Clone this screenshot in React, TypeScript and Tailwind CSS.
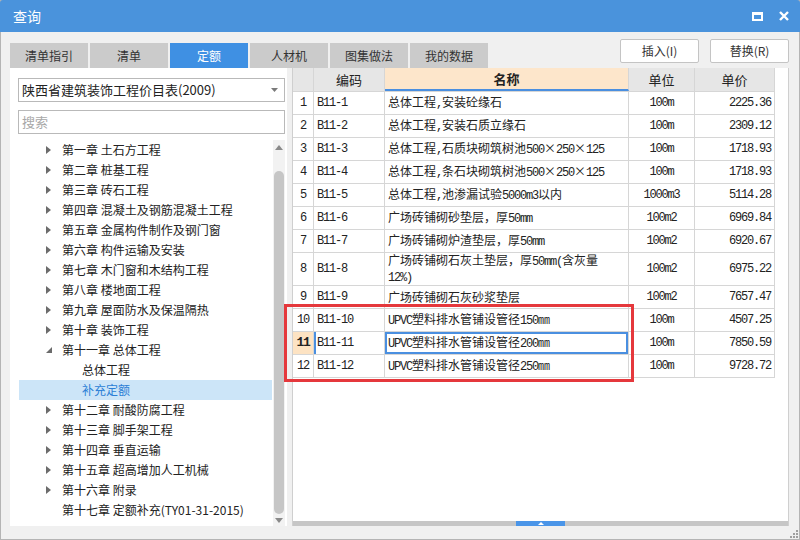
import React from 'react';

const tabs = ['清单指引', '清单', '定额', '人材机', '图集做法', '我的数据'];

type TreeItem = { label: string; level: number; arrow?: 'right' | 'down'; selected?: boolean };

const tree: TreeItem[] = [
  { label: '第一章 土石方工程', level: 0, arrow: 'right' },
  { label: '第二章 桩基工程', level: 0, arrow: 'right' },
  { label: '第三章 砖石工程', level: 0, arrow: 'right' },
  { label: '第四章 混凝土及钢筋混凝土工程', level: 0, arrow: 'right' },
  { label: '第五章 金属构件制作及钢门窗', level: 0, arrow: 'right' },
  { label: '第六章 构件运输及安装', level: 0, arrow: 'right' },
  { label: '第七章 木门窗和木结构工程', level: 0, arrow: 'right' },
  { label: '第八章 楼地面工程', level: 0, arrow: 'right' },
  { label: '第九章 屋面防水及保温隔热', level: 0, arrow: 'right' },
  { label: '第十章 装饰工程', level: 0, arrow: 'right' },
  { label: '第十一章 总体工程', level: 0, arrow: 'down' },
  { label: '总体工程', level: 1 },
  { label: '补充定额', level: 1, selected: true },
  { label: '第十二章 耐酸防腐工程', level: 0, arrow: 'right' },
  { label: '第十三章 脚手架工程', level: 0, arrow: 'right' },
  { label: '第十四章 垂直运输', level: 0, arrow: 'right' },
  { label: '第十五章 超高增加人工机械', level: 0, arrow: 'right' },
  { label: '第十六章 附录', level: 0, arrow: 'right' },
  { label: '第十七章 定额补充(TY01-31-2015)', level: 0 },
];

const rows = [
  ['1', 'B11-1', '总体工程,安装砼缘石', '100m', '2225.36'],
  ['2', 'B11-2', '总体工程,安装石质立缘石', '100m', '2309.12'],
  ['3', 'B11-3', '总体工程,石质块砌筑树池500×250×125', '100m', '1718.93'],
  ['4', 'B11-4', '总体工程,条石块砌筑树池500×250×125', '100m', '1718.93'],
  ['5', 'B11-5', '总体工程,池渗漏试验5000m3以内', '1000m3', '5114.28'],
  ['6', 'B11-6', '广场砖铺砌砂垫层，厚50mm', '100m2', '6969.84'],
  ['7', 'B11-7', '广场砖铺砌炉渣垫层，厚50mm', '100m2', '6920.67'],
  ['8', 'B11-8', '广场砖铺砌石灰土垫层，厚50mm(含灰量\n12%)', '100m2', '6975.22'],
  ['9', 'B11-9', '广场砖铺砌石灰砂浆垫层', '100m2', '7657.47'],
  ['10', 'B11-10', 'UPVC塑料排水管铺设管径150㎜', '100m', '4507.25'],
  ['11', 'B11-11', 'UPVC塑料排水管铺设管径200㎜', '100m', '7850.59'],
  ['12', 'B11-12', 'UPVC塑料排水管铺设管径250㎜', '100m', '9728.72'],
];

// ascii runs get the narrow mono face, like SimSun's half-width glyphs
const Mixed = ({ text }: { text: string }) => {
  const lines = text.split('\n');
  return (
    <>
      {lines.map((line, li) => (
        <React.Fragment key={li}>
          {li > 0 && <br />}
          {line.split(/([\x20-\x7e]+)/).map((p, i) =>
            i % 2 === 1 ? (
              <span key={i} className="font-['Liberation_Mono',monospace] tracking-[-1.2px]">
                {p}
              </span>
            ) : (
              p
            )
          )}
        </React.Fragment>
      ))}
    </>
  );
};

const Arrow = ({ dir }: { dir?: 'right' | 'down' }) => {
  if (dir === 'right')
    return (
      <svg width="5" height="8" viewBox="0 0 5 8">
        <path d="M0 0 L5 4 L0 8 Z" fill="#6b6b6b" />
      </svg>
    );
  if (dir === 'down')
    return (
      <svg width="6" height="6" viewBox="0 0 6 6">
        <path d="M6 0 L6 6 L0 6 Z" fill="#6b6b6b" />
      </svg>
    );
  return null;
};

const App: React.FC = () => {
  return (
    <div className="relative w-[800px] h-[540px] overflow-hidden bg-[#f0f0f0] shadow-[inset_0_0_0_1px_#b4b4b4] font-['Noto_Sans_CJK_SC',sans-serif] text-[#222]">
      {/* title bar */}
      <div className="h-[32px] bg-[#4a93dc] flex items-center justify-between pl-[13px] pr-[11px] rounded-t-[3px]">
        <span className="text-white text-[14px]">查询</span>
        <div className="flex items-center gap-[16px]">
          <svg width="11" height="9" viewBox="0 0 11 9">
            <rect x="1" y="1.5" width="9" height="6.5" fill="none" stroke="white" strokeWidth="2" />
            <rect x="0" y="0" width="11" height="3" fill="white" />
          </svg>
          <svg width="10" height="10" viewBox="0 0 10 10">
            <path d="M1 1 L9 9 M9 1 L1 9" stroke="white" strokeWidth="2.4" />
          </svg>
        </div>
      </div>

      {/* tab row */}
      <div className="h-[36px] flex justify-between pl-[10px] pr-[11px]">
        <div className="flex items-end gap-[2px]">
          {tabs.map((t) => (
            <div
              key={t}
              className={
                t === '定额'
                  ? 'w-[78px] h-[25px] flex items-center justify-center text-[12px] bg-[#3f90e3] text-white'
                  : 'w-[78px] h-[25px] flex items-center justify-center text-[12px] bg-[#cbcbcb] text-[#333]'
              }
            >
              {t}
            </div>
          ))}
        </div>
        <div className="flex gap-[11px] pt-[7px]">
          <div className="w-[79px] h-[24px] flex items-center justify-center bg-white border border-[#c4c4c4] rounded-[2px] text-[12px] text-[#333]">
            插入(I)
          </div>
          <div className="w-[79px] h-[24px] flex items-center justify-center bg-white border border-[#c4c4c4] rounded-[2px] text-[12px] text-[#333]">
            替换(R)
          </div>
        </div>
      </div>

      {/* main */}
      <div className="h-[458px] flex gap-[5px] pl-[10px] pr-[11px]">
        {/* left panel */}
        <div className="w-[277px] bg-white flex flex-col pl-[8px] pr-[2px] pt-[10px]">
          <div className="h-[24px] border border-[#b9b9b9] flex items-center justify-between pl-[3px] pr-[6px] text-[13px] text-[#222]">
            <span>陕西省建筑装饰工程价目表(2009)</span>
            <svg width="7" height="4" viewBox="0 0 7 4">
              <path d="M0 0 L7 0 L3.5 4 Z" fill="#7a7a7a" />
            </svg>
          </div>
          <div className="h-[24px] mt-[8px] border border-[#b9b9b9] flex items-center pl-[3px] text-[13px] text-[#a8a8a8]">
            搜索
          </div>
          <div className="flex-1 mt-[6px] flex">
            <div className="flex-1 pl-[1px] pr-[1px]">
              {tree.map((it) => (
                <div
                  key={it.label}
                  className={
                    it.selected
                      ? 'h-[20px] flex items-center bg-[#cce5f8] text-[#2b7fd6] text-[12px]'
                      : 'h-[20px] flex items-center text-[12px] text-[#222]'
                  }
                >
                  {it.level === 0 ? (
                    <span className="w-[43px] pl-[27px] flex items-center">
                      <Arrow dir={it.arrow} />
                    </span>
                  ) : (
                    <span className="w-[63px]" />
                  )}
                  <span>{it.label}</span>
                </div>
              ))}
            </div>
            <div className="w-[12px] bg-[#f2f2f2] flex flex-col items-center">
              <div className="h-[12px] flex items-center justify-center mt-[1px]">
                <svg width="8" height="5" viewBox="0 0 8 5">
                  <path d="M0 5 L4 0 L8 5 Z" fill="#8a8a8a" />
                </svg>
              </div>
              <div className="h-[18px]" />
              <div className="flex-1 w-[10px] rounded-[5px] bg-[#c6c6c6]" />
              <div className="h-[12px] flex items-center justify-center">
                <svg width="8" height="5" viewBox="0 0 8 5">
                  <path d="M0 0 L8 0 L4 5 Z" fill="#8a8a8a" />
                </svg>
              </div>
            </div>
          </div>
        </div>

        {/* right panel */}
        <div className="flex-1 bg-white border-l border-r border-[#cfcfcf] flex flex-col">
          <div className="flex-1 flex">
            <div className="w-[482px] text-[12px]">
              {/* header */}
              <div className="h-[24px] flex border-b border-[#d6d6d6] text-[13px] text-[#222]">
                <div className="w-[21px] bg-[#e6e6e6] border-r border-[#d6d6d6]" />
                <div className="w-[71px] bg-[#e6e6e6] border-r border-[#d6d6d6] flex items-center justify-center">编码</div>
                <div className="w-[244px] bg-[#fde6cb] border-r border-[#d6d6d6] border-b-2 border-b-[#4a8fe0] flex items-center justify-center font-bold">名称</div>
                <div className="w-[66px] bg-[#e6e6e6] border-r border-[#d6d6d6] flex items-center justify-center">单位</div>
                <div className="w-[80px] bg-[#e6e6e6] border-r border-[#d6d6d6] flex items-center justify-center">单价</div>
              </div>
              {rows.map((r, i) => {
                const sel = i === 10;
                return (
                  <div
                    key={r[0]}
                    className={i === 7 ? 'h-[33px] flex border-b border-[#d6d6d6]' : 'h-[23px] flex border-b border-[#d6d6d6]'}
                  >
                    <div
                      className={
                        sel
                          ? "w-[21px] border-r border-[#d6d6d6] bg-[#fde3c3] flex items-center justify-center font-bold font-['Liberation_Mono',monospace] tracking-[-1.2px] text-[13px]"
                          : "w-[21px] border-r border-[#d6d6d6] flex items-center justify-center font-['Liberation_Mono',monospace] tracking-[-1.2px]"
                      }
                    >
                      {r[0]}
                    </div>
                    <div
                      className={
                        sel
                          ? 'w-[71px] border-r border-[#d6d6d6] border-l-2 border-l-[#4a8fe0] flex items-center pl-[1px]'
                          : 'w-[71px] border-r border-[#d6d6d6] flex items-center pl-[3px]'
                      }
                    >
                      <Mixed text={r[1]} />
                    </div>
                    <div
                      className={
                        sel
                          ? 'w-[244px] border-r border-[#d6d6d6] flex items-center pl-[3px] shadow-[inset_0_0_0_2px_#4a8fe0] leading-[14px]'
                          : 'w-[244px] border-r border-[#d6d6d6] flex items-center pl-[3px] leading-[14px]'
                      }
                    >
                      <span>
                        <Mixed text={r[2]} />
                      </span>
                    </div>
                    <div className="w-[66px] border-r border-[#d6d6d6] flex items-center justify-center">
                      <Mixed text={r[3]} />
                    </div>
                    <div className="w-[80px] border-r border-[#d6d6d6] flex items-center justify-end pr-[3px]">
                      <Mixed text={r[4]} />
                    </div>
                  </div>
                );
              })}
            </div>
            <div className="flex-1" />
          </div>
          <div className="h-[5px] bg-[#c6c6c6] flex justify-center">
            <div className="w-[49px] h-[5px] bg-[#4a95e8] flex items-center justify-center">
              <svg width="6" height="3" viewBox="0 0 6 3">
                <path d="M0 3 L3 0 L6 3 Z" fill="white" />
              </svg>
            </div>
          </div>
        </div>
      </div>

      {/* status strip with resize grip */}
      <div className="h-[14px] flex justify-end items-end pr-[2px] pb-[2px]">
        <svg width="9" height="9" viewBox="0 0 9 9">
          <rect x="7" y="1" width="2" height="2" fill="#a0a0a0" />
          <rect x="4" y="4" width="2" height="2" fill="#a0a0a0" />
          <rect x="7" y="4" width="2" height="2" fill="#a0a0a0" />
          <rect x="1" y="7" width="2" height="2" fill="#a0a0a0" />
          <rect x="4" y="7" width="2" height="2" fill="#a0a0a0" />
          <rect x="7" y="7" width="2" height="2" fill="#a0a0a0" />
        </svg>
      </div>

      {/* red annotation box */}
      <div className="absolute left-[284px] top-[304px] w-[350px] h-[78px] border-[3px] border-[#e5383c]" />
    </div>
  );
};

export default App;
